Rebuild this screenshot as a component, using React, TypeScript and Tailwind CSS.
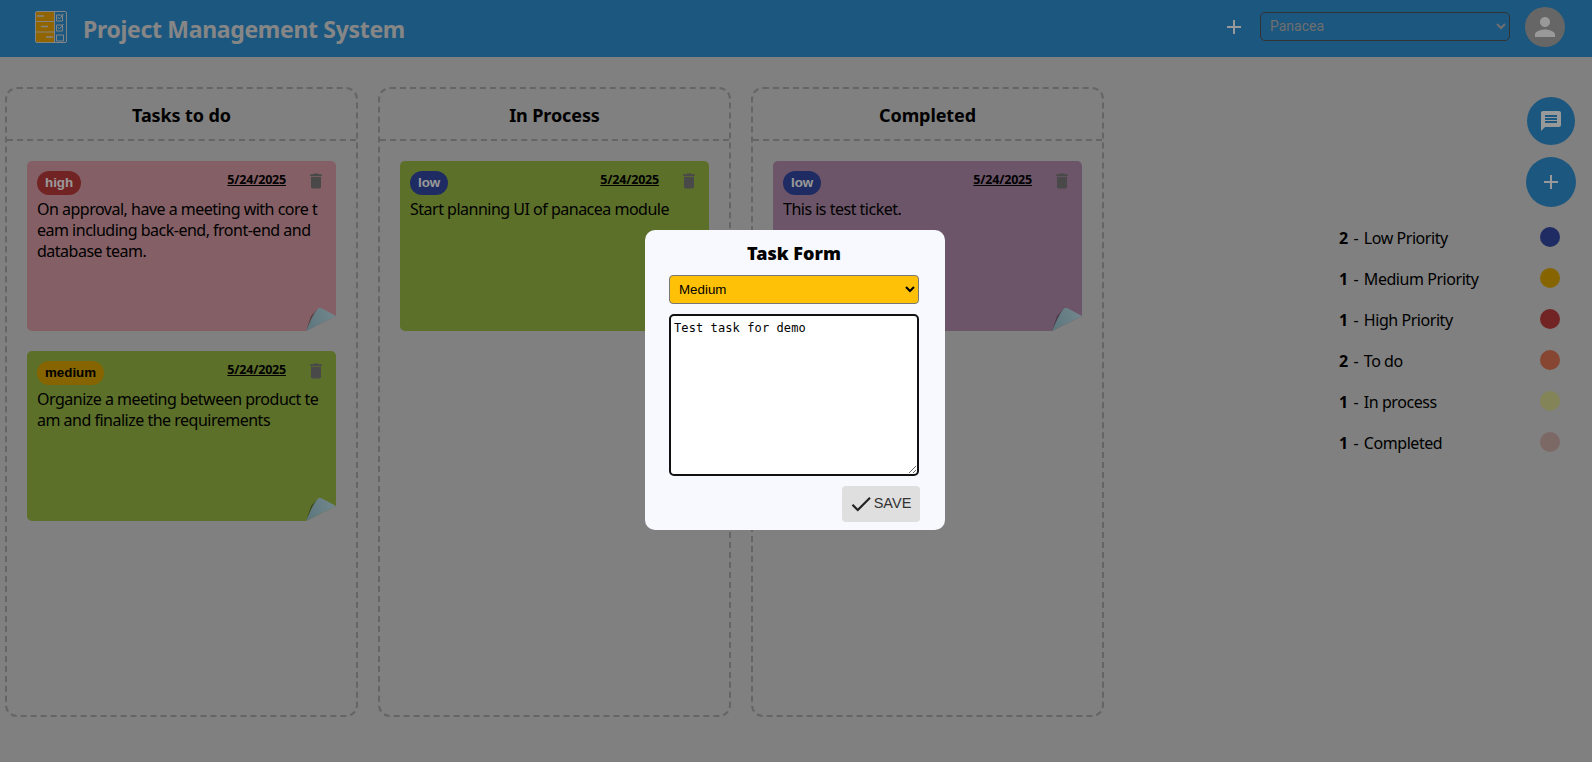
const sans = "font-['Noto_Sans',sans-serif]"

const columns = [
  {
    title: 'Tasks to do',
    cards: [
      { level: 'high', bg: 'bg-[#dc9fa8]', chip: 'bg-[#bf3d3d] text-white', lines: ['On approval, have a meeting with core t', 'eam including back-end, front-end and', 'database team.'] },
      { level: 'medium', bg: 'bg-[#9abb45]', chip: 'bg-[#e0a800] text-black', lines: ['Organize a meeting between product te', 'am and finalize the requirements'] },
    ],
  },
  {
    title: 'In Process',
    cards: [{ level: 'low', bg: 'bg-[#9abb45]', chip: 'bg-[#354aa5] text-white', lines: ['Start planning UI of panacea module'] }],
  },
  {
    title: 'Completed',
    cards: [{ level: 'low', bg: 'bg-[#b58eae]', chip: 'bg-[#354aa5] text-white', lines: ['This is test ticket.'] }],
  },
]

const legend = [
  { count: 2, label: 'Low Priority', color: 'bg-[#354aa5]' },
  { count: 1, label: 'Medium Priority', color: 'bg-[#e0a800]' },
  { count: 1, label: 'High Priority', color: 'bg-[#bf3d3d]' },
  { count: 2, label: 'To do', color: 'bg-[#e17553]' },
  { count: 1, label: 'In process', color: 'bg-[#dcdc94]' },
  { count: 1, label: 'Completed', color: 'bg-[#cfb0a8]' },
]

function Icon({ d, className }: { d: string; className: string }) {
  return (
    <svg viewBox="0 0 24 24" className={className} fill="currentColor">
      <path d={d} />
    </svg>
  )
}

const addPath = 'M19 13h-6v6h-2v-6H5v-2h6V5h2v6h6v2z'
const trashPath = 'M6 19c0 1.1.9 2 2 2h8c1.1 0 2-.9 2-2V7H6v12zM19 4h-3.5l-1-1h-5l-1 1H5v2h14V4z'
const chatPath = 'M20 2H4c-1.1 0-1.99.9-1.99 2L2 22l4-4h14c1.1 0 2-.9 2-2V4c0-1.1-.9-2-2-2zm-2 12H6v-2h12v2zm0-3H6V9h12v2zm0-3H6V6h12v2z'
const personPath = 'M12 12c2.21 0 4-1.79 4-4s-1.79-4-4-4-4 1.79-4 4 1.79 4 4 4zm0 2c-2.67 0-8 1.34-8 4v2h16v-2c0-2.66-5.33-4-8-4z'
const checkPath = 'M9 16.17L4.83 12l-1.42 1.41L9 19 21 7l-1.41-1.41z'

function Logo() {
  return (
    <svg viewBox="0 0 32 32" className="w-8 h-8 shrink-0">
      <rect x="0.5" y="0.5" width="31" height="31" rx="1.5" fill="#3091d4" stroke="#ddd" />
      <rect x="1" y="1" width="18.5" height="30" fill="#f0a800" />
      <path d="M1 10.5h18.5M1 21h18.5M19.5 1v30" stroke="#ddd" strokeWidth="1" />
      <path d="M2 5h7M6 15.5h7M11 26h7" stroke="#ddd" strokeWidth="1.5" />
      <path d="M21.5 4h6v6h-6zM21.5 14h6v6h-6zM21.5 24h7v6h-7z" fill="none" stroke="#ddd" strokeWidth="1" />
      <path d="M22.5 6l2 2 4-5M22.5 16l2 2 4-5" fill="none" stroke="#ddd" strokeWidth="1" />
    </svg>
  )
}

function Fold({ id }: { id: string }) {
  return (
    <svg viewBox="0 0 30 24" className="absolute right-0 bottom-0 w-[30px] h-[24px]">
      <defs>
        <linearGradient id={id} x1="0" y1="0.6" x2="1" y2="0.3">
          <stop offset="0" stopColor="#9cc6d2" />
          <stop offset="1" stopColor="#bfe2ec" />
        </linearGradient>
      </defs>
      <polygon points="0,24 30,9 30,24" fill="#d5d5d5" />
      <path d="M0 24 C4 15 7 7 12 1.5 C13 0.5 14 0.5 16 1.5 L30 9 Z" fill={`url(#${id})`} />
      <path d="M0 24 C4 15 7 7 12 1.5 L5 9 Z" fill="#000" opacity="0.35" />
    </svg>
  )
}

function Card({ card, id }: { card: (typeof columns)[0]['cards'][0]; id: string }) {
  return (
    <div className={`relative h-[170px] rounded-[5px] pt-[10px] pl-[10px] pr-[10px] ${card.bg}`}>
      <div className="flex items-start justify-between h-[24px]">
        <span className={`h-[24px] leading-[24px] rounded-full px-2 text-[13.33px] font-bold font-['Liberation_Sans',sans-serif] ${card.chip}`}>{card.level}</span>
        <div className="flex items-start">
          <span className={`mt-[-1px] text-[12.5px] leading-[20px] tracking-[-0.2px] font-bold underline text-black ${sans}`}>5/24/2025</span>
          <Icon d={trashPath} className="w-[20px] h-[20px] ml-[20px] text-[#7b7b7b]" />
        </div>
      </div>
      <p className={`mt-[4px] text-[16px] leading-[21px] tracking-[-0.5px] text-black ${sans}`}>
        {card.lines.map(line => (
          <span key={line} className="block whitespace-nowrap">{line}</span>
        ))}
      </p>
      <Fold id={id} />
    </div>
  )
}

export default function App() {
  return (
    <div className={`relative h-[762px] w-[1592px] overflow-hidden bg-[#d5d5d5] ${sans}`}>
      <header className="flex items-center h-[57px] bg-[#3091d4] pl-[35px] pr-[27px] pb-[3px]">
        <Logo />
        <h1 className="ml-[16px] mt-[5px] text-[23px] tracking-[-0.32px] font-bold text-[#e0e0e0]">Project Management System</h1>
        <Icon d={addPath} className="ml-auto w-[24px] h-[24px] text-white" />
        <select defaultValue="Panacea" className="ml-[14px] mb-[2px] w-[250px] h-[29px] rounded-[5px] border border-[#555] bg-transparent pl-[5px] text-[14px] text-[#b8b8b8] font-['Roboto',sans-serif]">
          <option>Panacea</option>
        </select>
        <div className="ml-[15px] w-[40px] h-[40px] rounded-full bg-[#aaaaaa] flex items-center justify-center">
          <Icon d={personPath} className="w-[30px] h-[30px] text-white" />
        </div>
      </header>

      <main className="flex pl-[5px] pt-[30px]">
        <div className="flex gap-[20px]">
          {columns.map((col, i) => (
            <section key={col.title} className="w-[353px] h-[630px] rounded-[12px] border-2 border-dashed border-[#a8a8a8]">
              <h2 className="h-[52px] pt-[2px] flex items-center justify-center border-b-2 border-dashed border-[#a8a8a8] text-[18px] tracking-[-0.1px] font-bold text-black">{col.title}</h2>
              <div className="flex flex-col gap-[20px] pt-[20px] px-[20px]">
                {col.cards.map((card, j) => (
                  <Card key={j} card={card} id={`fold${i}${j}`} />
                ))}
              </div>
            </section>
          ))}
        </div>

        <aside className="ml-auto w-[253px] pr-[16px] pt-[10px] flex flex-col items-end">
          <button className="w-[48px] h-[48px] mr-[1px] rounded-full bg-[#3091d4] flex items-center justify-center">
            <Icon d={chatPath} className="w-[24px] h-[24px] text-white" />
          </button>
          <button className="mt-[12px] w-[50px] h-[50px] rounded-full bg-[#3091d4] flex items-center justify-center">
            <Icon d={addPath} className="w-[24px] h-[24px] text-white" />
          </button>
          <ul className="mt-[20px] w-full pr-[16px] flex flex-col gap-[21px]">
            {legend.map(item => (
              <li key={item.label} className="flex items-center justify-between h-[20px] text-[16px] tracking-[-0.45px] text-black">
                <span className="mt-[2px]"><b className="mr-[2px]">{item.count}</b> <span className="mr-[2px]">-</span> {item.label}</span>
                <span className={`w-[20px] h-[20px] rounded-full ${item.color}`} />
              </li>
            ))}
          </ul>
        </aside>
      </main>

      <div className="fixed inset-0 bg-black/40 flex items-center justify-center pr-[2px] pb-[2px]">
        <form className="w-[300px] h-[300px] rounded-[10px] bg-[#f8f9ff] pl-[24px] pr-[26px]">
          <h3 className="mt-[10px] h-[26px] leading-[26px] text-center text-[18px] font-black text-black">Task Form</h3>
          <select defaultValue="Medium" className="mt-[9px] block w-full h-[29px] rounded-[4px] border border-[#777] bg-[#ffc107] pl-[5px] text-[13.33px] text-black font-['Liberation_Sans',sans-serif]">
            <option>Medium</option>
          </select>
          <textarea
            defaultValue="Test task for demo"
            className="mt-[10px] block w-full h-[162px] rounded-[5px] border-2 border-[#111] bg-white px-[3px] pt-[5px] pb-[3px] text-[12px] tracking-[0.1px] leading-[15px] text-black font-['DejaVu_Sans_Mono',monospace] outline-none"
          />
          <div className="mt-[10px] flex justify-end">
            <button type="button" className="mr-[-1px] w-[78px] h-[36px] rounded-[4px] bg-[#dfdfdf] flex items-center justify-center text-[14.5px] text-[#333] font-['Liberation_Sans',sans-serif]">
              <Icon d={checkPath} className="w-[26px] h-[26px] ml-[-3px] text-[#222]" />
              <span>SAVE</span>
            </button>
          </div>
        </form>
      </div>
    </div>
  )
}
